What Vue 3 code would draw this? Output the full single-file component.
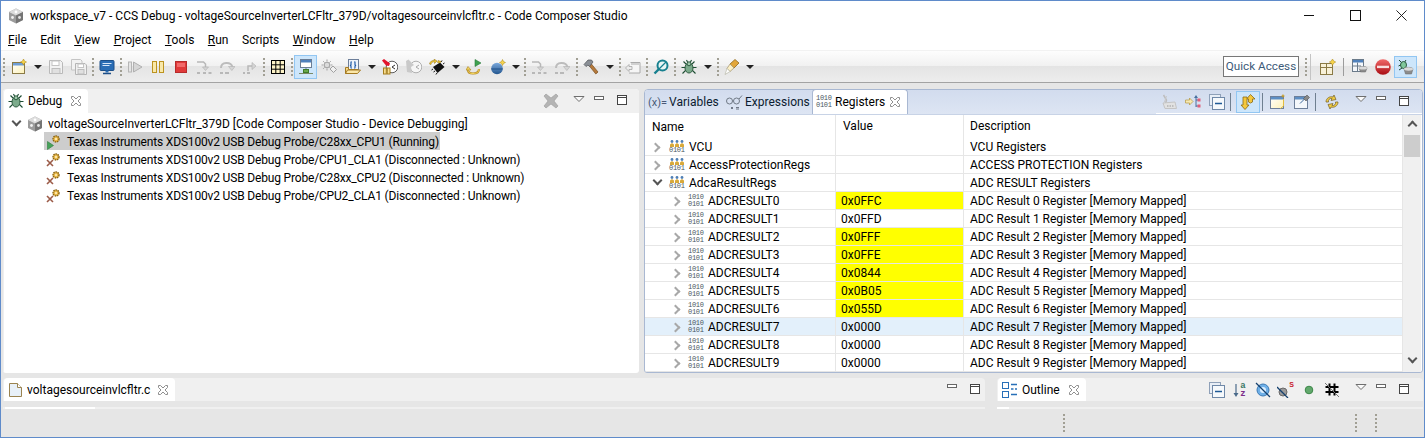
<script setup>
const menus = [
  { u: 'F', t: 'ile' },
  { u: '', t: 'Edit' },
  { u: 'V', t: 'iew' },
  { u: 'P', t: 'roject' },
  { u: 'T', t: 'ools' },
  { u: 'R', t: 'un' },
  { u: '', t: 'Scripts' },
  { u: 'W', t: 'indow' },
  { u: 'H', t: 'elp' }
]

// main toolbar, left to right: [kind or icon name, cell width]
const tools = [
  ['grip', 5], ['new', 25], ['drop', 13], ['save', 23], ['saveall', 23], ['grip', 5], ['monitor', 23], ['grip', 5],
  ['resume', 23], ['suspend', 23], ['terminate', 23], ['stepinto', 23], ['stepover', 23], ['stepret', 23], ['grip', 5],
  ['grid', 23], ['grip', 5], ['connect', 23, true], ['pingear', 24], ['folder', 24], ['drop', 13], ['clock', 24],
  ['clockoff', 23], ['chip', 24], ['drop', 13], ['runback', 24], ['ball', 23], ['drop', 13], ['grip', 5],
  ['stepinto', 23], ['stepover', 24], ['grip', 5], ['hammer', 23], ['drop', 15], ['grip', 5], ['winarrow', 22],
  ['grip', 5], ['search', 23], ['grip', 5], ['bug', 23], ['drop', 15], ['grip', 5], ['marker', 23], ['drop', 13]
]

const treeRows = [
  { icon: 'run', text: 'Texas Instruments XDS100v2 USB Debug Probe/C28xx_CPU1 (Running)', selected: true },
  { icon: 'off', text: 'Texas Instruments XDS100v2 USB Debug Probe/CPU1_CLA1 (Disconnected : Unknown)' },
  { icon: 'off', text: 'Texas Instruments XDS100v2 USB Debug Probe/C28xx_CPU2 (Disconnected : Unknown)' },
  { icon: 'off', text: 'Texas Instruments XDS100v2 USB Debug Probe/CPU2_CLA1 (Disconnected : Unknown)' }
]

const groups = [
  { name: 'VCU', desc: 'VCU Registers' },
  { name: 'AccessProtectionRegs', desc: 'ACCESS PROTECTION Registers' },
  { name: 'AdcaResultRegs', desc: 'ADC RESULT Registers', open: true }
]
const values = ['0x0FFC', '0x0FFD', '0x0FFF', '0x0FFE', '0x0844', '0x0B05', '0x055D', '0x0000', '0x0000', '0x0000']
const changed = [0, 2, 3, 4, 5, 6]
const registers = values.map((value, i) => ({
  name: 'ADCRESULT' + i,
  value,
  desc: `ADC Result ${i} Register [Memory Mapped]`,
  changed: changed.includes(i),
  hover: i === 7
}))
</script>

<template>
  <div class="window">
    <svg class="defs" width="0" height="0" aria-hidden="true">
      <defs>
        <linearGradient id="g-red" x1="0" y1="0" x2="0" y2="1"><stop offset="0" stop-color="#f26a6a" /><stop offset="1" stop-color="#a80c12" /></linearGradient>
        <linearGradient id="g-blue" x1="0" y1="0" x2="0" y2="1"><stop offset="0" stop-color="#7aa8dc" /><stop offset="1" stop-color="#23568f" /></linearGradient>
        <linearGradient id="g-win" x1="0" y1="0" x2="1" y2="1"><stop offset="0" stop-color="#ffffff" /><stop offset="1" stop-color="#fdf1b8" /></linearGradient>
      </defs>
      <symbol id="i-cube" viewBox="0 0 16 16">
        <path d="M8 .5l7 3.500v8l-7 3.500-7-3.500V4z" fill="#9c9c9c" />
        <path d="M8 .5l7 3.500-7 3.500L1 4z" fill="#dcdcdc" />
        <path d="M8 7.500v8l7-3.500V4z" fill="#757575" />
        <circle cx="8" cy="4" r="1.400" fill="#fff" /><circle cx="4.500" cy="9.500" r="1.400" fill="#f2f2f2" /><circle cx="11.500" cy="9.500" r="1.400" fill="#e6e6e6" />
      </symbol>
      <symbol id="i-new" viewBox="0 0 16 16">
        <rect x="1.500" y="3.500" width="12" height="11" fill="url(#g-win)" stroke="#8a7a45" />
        <rect x="2" y="4" width="11" height="2.500" fill="#6f9ed6" />
        <path d="M12.500 0l1 2 2 1-2 1-1 2-1-2-2-1 2-1z" fill="#f6d34a" stroke="#a88416" stroke-width=".5" />
      </symbol>
      <symbol id="i-save" viewBox="0 0 16 16">
        <path d="M1.500 1.500h11l2 2v11h-13z" fill="#f2f2f2" stroke="#b9b9b9" />
        <rect x="4" y="2" width="7" height="4.500" fill="#fff" stroke="#c4c4c4" />
        <rect x="4" y="9.500" width="8" height="5" fill="#e0e0e0" stroke="#bdbdbd" />
      </symbol>
      <symbol id="i-saveall" viewBox="0 0 16 16">
        <path d="M.5.500h9l1.500 1.500v9H.500z" fill="#f2f2f2" stroke="#c4c4c4" />
        <path d="M4.500 4.500h9.500l1.500 1.500v9.500h-11z" fill="#f0f0f0" stroke="#b4b4b4" />
        <rect x="7" y="5" width="5.500" height="3.500" fill="#fff" stroke="#c4c4c4" />
        <rect x="7" y="10.500" width="6" height="4.500" fill="#e0e0e0" stroke="#bdbdbd" />
      </symbol>
      <symbol id="i-monitor" viewBox="0 0 16 16">
        <rect x="1" y="1.500" width="14" height="10" rx="1" fill="#2a6db5" stroke="#1d4f88" />
        <path d="M3.500 4.500h9M3.500 6.500h7" stroke="#d6e6f7" />
        <path d="M6.500 11.500h3v2h-3z" fill="#2a6db5" /><path d="M4 14.500h8" stroke="#1d4f88" stroke-width="1.500" />
      </symbol>
      <symbol id="i-resume" viewBox="0 0 16 16">
        <rect x="1.500" y="3" width="3" height="10" fill="#e5e5e5" stroke="#b5b5b5" />
        <path d="M6.500 3l8.500 5-8.500 5z" fill="#d6d6d6" stroke="#b0b0b0" />
      </symbol>
      <symbol id="i-suspend" viewBox="0 0 16 16">
        <rect x="2.500" y="2.500" width="4" height="11" fill="#f9e8a9" stroke="#bc9320" />
        <rect x="9.500" y="2.500" width="4" height="11" fill="#f9e8a9" stroke="#bc9320" />
      </symbol>
      <symbol id="i-terminate" viewBox="0 0 16 16">
        <rect x="2.500" y="2.500" width="11" height="11" fill="#e03a3a" stroke="#b62b2b" />
        <rect x="4" y="4" width="8" height="4" fill="#f26a6a" />
      </symbol>
      <symbol id="i-stepinto" viewBox="0 0 16 16">
        <path d="M1 3h6.500l2 2v4" fill="none" stroke="#b8b8b8" stroke-width="1.500" />
        <path d="M6.500 8l3 3.500 3-3.500z" fill="#d5d5d5" stroke="#b0b0b0" stroke-width=".6" />
        <path d="M1 14h3M7 14h3M12.500 14h3" stroke="#a8a8a8" stroke-width="1.300" />
      </symbol>
      <symbol id="i-stepover" viewBox="0 0 16 16">
        <path d="M2 9C2 2.500 12 2.500 13.500 8" fill="none" stroke="#bcbcbc" stroke-width="2" />
        <path d="M9.500 7.500h6.500l-3.200 4z" fill="#d5d5d5" stroke="#b0b0b0" stroke-width=".6" />
        <path d="M1 14h3M6 14h4" stroke="#a8a8a8" stroke-width="1.300" />
      </symbol>
      <symbol id="i-stepret" viewBox="0 0 16 16">
        <path d="M6 12V7h5" fill="none" stroke="#b8b8b8" stroke-width="1.500" />
        <path d="M10 3.500L14 7l-4 3.500z" fill="#d5d5d5" stroke="#b0b0b0" stroke-width=".6" />
        <path d="M1 14h2M5 14h3" stroke="#a8a8a8" stroke-width="1.300" />
      </symbol>
      <symbol id="i-grid" viewBox="0 0 16 16">
        <rect x="1.500" y="1.500" width="13" height="13" fill="#fdf3c7" stroke="#000" />
        <path d="M5.800 1.500v13M10.200 1.500v13M1.500 5.800h13M1.500 10.200h13" stroke="#000" />
      </symbol>
      <symbol id="i-connect" viewBox="0 0 16 16">
        <rect x="2.500" y=".5" width="11" height="8" fill="#fff" stroke="#6b7d95" />
        <rect x="3" y="1" width="10" height="2.500" fill="#4f81bd" />
        <path d="M8 9v2" stroke="#6b7d95" />
        <rect x="5.500" y="10.500" width="5" height="3" fill="#67a94a" stroke="#3e7a2b" />
        <path d="M1 14.500h14" stroke="#7a8a6a" />
      </symbol>
      <symbol id="i-pingear" viewBox="0 0 16 16">
        <circle cx="6" cy="6" r="2.800" fill="#dcdcdc" stroke="#a2a2a2" />
        <path d="M6 .5v2M6 9.500v2M.5 6h2M9.500 6h2M2.200 2.200l1.400 1.400M8.400 8.400l1.400 1.400M2.200 9.800l1.400-1.400M8.400 3.600l1.400-1.400" stroke="#a2a2a2" />
        <path d="M9 10l3-3 3.500 3.500-3 3z" fill="#f0f0f0" stroke="#a0a0a0" />
      </symbol>
      <symbol id="i-folder" viewBox="0 0 16 16">
        <rect x="3.500" y=".5" width="10" height="10" fill="#eef3fa" stroke="#6d7f9a" />
        <path d="M6.500 2.500C5 4 7 5 5.500 6.500 7 8 5 8 6.500 9.500M9.500 2.500c1.500 1.500-.5 2.500 1 4-1.500 1.500.5 1.500-1 3" fill="none" stroke="#1f5aa6" stroke-width="1.200" />
        <path d="M.5 14.500V8.500h3v2h9l-2 4z" fill="#f7d98a" stroke="#a57a22" />
        <path d="M.5 14.500l2-3.500h13l-3 3.500z" fill="#fbe7a8" stroke="#a57a22" />
      </symbol>
      <symbol id="i-clock" viewBox="0 0 16 16">
        <circle cx="10" cy="8" r="5.800" fill="#fff" stroke="#5d5d5d" />
        <path d="M13 6l-3 2 3 2" fill="none" stroke="#333" />
        <rect x="1.500" y="9" width="2.800" height="6" fill="#f7dc8e" stroke="#a47d1c" />
        <rect x="5.200" y="9" width="2.800" height="6" fill="#f7dc8e" stroke="#a47d1c" />
        <path d="M0 1.500L2 0l6 4.500-1 2.500-3-.5z" fill="#e3142b" />
      </symbol>
      <symbol id="i-clockoff" viewBox="0 0 16 16">
        <circle cx="10" cy="8" r="5.800" fill="#f6f6f6" stroke="#b0b0b0" />
        <path d="M13 6l-3 2 3 2" fill="none" stroke="#a8a8a8" />
        <path d="M0 2l2.500-1.500L8 6 5 8l1 6-5-1z" fill="#c9c9c9" />
      </symbol>
      <symbol id="i-chip" viewBox="0 0 16 16">
        <path d="M4 8l7-4.500 4.500 4.500-7 6z" fill="#111" />
        <path d="M4 10l-1.500 1M6 12l-1.500 1M8 14l-1 1.500M12 3l1-1.500M14 5l1.500-1" stroke="#111" />
        <path d="M.5 5C1 2.500 3 1 5.500 1.500L5 0l3 2-2.500 2.500V3C3.500 2.500 2.500 3.500 2 5.500z" fill="#eec62f" stroke="#947217" stroke-width=".5" />
        <path d="M9 1.500l3 1-1 1.500-2.500-.5z" fill="#eec62f" stroke="#947217" stroke-width=".5" />
      </symbol>
      <symbol id="i-runback" viewBox="0 0 16 16">
        <path d="M9 .5l6 3.500-6 3.500z" fill="#3ea150" stroke="#2a7a3a" stroke-width=".6" />
        <path d="M13 10c0 3-2 4.500-6 4.500-3 0-5-1-5-3.500" fill="none" stroke="#b78a22" stroke-width="2.200" />
        <path d="M13 10c0 3-2 4.500-6 4.500-3 0-5-1-5-3.500" fill="none" stroke="#f4d65e" stroke-width="1" />
        <path d="M0 11l2-3.500 3 3.500z" fill="#f4d65e" stroke="#a67e1c" stroke-width=".6" />
      </symbol>
      <symbol id="i-ball" viewBox="0 0 16 16">
        <circle cx="7" cy="9.500" r="5.800" fill="url(#g-blue)" />
        <path d="M1.300 10h11.400" stroke="#1f4f86" />
        <path d="M12.500 .5l1 2 2 1-2 1-1 2-1-2-2-1 2-1z" fill="#f6d34a" stroke="#a88416" stroke-width=".5" />
      </symbol>
      <symbol id="i-hammer" viewBox="0 0 16 16">
        <path d="M6 6.500l2-2 7 8.500-2.200 2z" fill="#b57a3c" stroke="#7a4d1e" stroke-width=".7" />
        <path d="M1 5.500L5 1h3.500l1.500 2-3.500 4.500L5 6 3 7.500z" fill="#8a8f96" stroke="#4e5257" stroke-width=".7" />
      </symbol>
      <symbol id="i-winarrow" viewBox="0 0 16 16">
        <path d="M5.500 3.500h9.500v10.500H4" fill="#f5f5f5" stroke="#aaa" />
        <path d="M6 4h9v2H6z" fill="#d0d0d0" />
        <path d="M.5 9l3.500-3.500v2h3v3h-3v2z" fill="#ececec" stroke="#a6a6a6" stroke-width=".8" />
      </symbol>
      <symbol id="i-search" viewBox="0 0 16 16">
        <circle cx="9.500" cy="6.500" r="5" fill="#e8f5f5" stroke="#17808f" stroke-width="2" />
        <path d="M6 10l-4.500 4.500" stroke="#17808f" stroke-width="2.400" />
        <path d="M13 3l-7 7" stroke="#17808f" stroke-width="1.300" />
      </symbol>
      <symbol id="i-bug" viewBox="0 0 16 16">
        <path d="M2.500 2.500l3 3M13.500 2.500l-3 3M.5 8.500h15M1.500 14.500l3-3M14.500 14.500l-3-3M5.500 1l1.500 3M10.500 1L9 4" stroke="#1d4d33" stroke-width="1.100" />
        <ellipse cx="8" cy="9" rx="4" ry="5" fill="#7cab8c" stroke="#2d5a3f" />
        <circle cx="8" cy="4.800" r="2" fill="#9ec7aa" stroke="#2d5a3f" />
      </symbol>
      <symbol id="i-marker" viewBox="0 0 16 16">
        <path d="M6 5l5-4.500 4 3.500-5 5z" fill="#e2a63a" stroke="#8f6a1d" stroke-width=".8" />
        <path d="M6 5l4 4-4 3.500-3-3z" fill="#fcf0c6" stroke="#a99c77" stroke-width=".8" />
        <path d="M3 9.500l3 3-5 3z" fill="#fff" stroke="#b8b8a8" stroke-width=".7" />
      </symbol>
      <symbol id="i-persp" viewBox="0 0 16 16">
        <rect x=".5" y="4.500" width="12" height="11" fill="#f8f1d8" stroke="#8a7a45" />
        <path d="M.5 8.500h12M6.500 4.500v11" stroke="#8a7a45" />
        <path d="M12.500 0l1.200 2 2 1-2 1.200-1.200 2-1.200-2-2-1.200 2-1z" fill="#f6d34a" stroke="#a88416" stroke-width=".5" />
      </symbol>
      <symbol id="i-perspgray" viewBox="0 0 16 16">
        <rect x=".5" y=".5" width="11" height="12" fill="#f4f7fb" stroke="#6a7a8a" />
        <rect x="1" y="1" width="10" height="2.500" fill="#4f81bd" />
        <path d="M1 7h8M5.500 3.500v9" stroke="#6a7a8a" />
        <path d="M7 9c0-2 8-2 8 0l-1.500 4h-5z" fill="#8c8c8c" stroke="#666" stroke-width=".5" />
        <ellipse cx="11" cy="9" rx="4" ry="1.500" fill="#dadada" />
      </symbol>
      <symbol id="i-stop" viewBox="0 0 16 16">
        <circle cx="8" cy="8" r="7.800" fill="url(#g-red)" />
        <rect x="2" y="6.700" width="12" height="2.400" fill="#f9dede" />
      </symbol>
      <symbol id="i-bugpersp" viewBox="0 0 16 16">
        <path d="M1 1l3 3M8 1L6 4M.5 7l3-1.500M1 11l3-2" stroke="#1d4d33" />
        <ellipse cx="5.500" cy="6" rx="3" ry="3.500" fill="#7fc79a" stroke="#2d5a3f" />
        <path d="M6 10c0-2.200 9-2.200 9 0l-1.500 5h-6z" fill="#8c8c8c" stroke="#666" stroke-width=".5" />
        <ellipse cx="10.500" cy="10" rx="4.500" ry="1.700" fill="#dadada" />
      </symbol>
      <symbol id="i-remove" viewBox="0 0 16 16">
        <path d="M3 1l5 4 5-4 2 2-4 5 4 5-2 2-5-4-5 4-2-2 4-5-4-5z" fill="#b4b4b4" stroke="#9a9a9a" stroke-width=".6" />
      </symbol>
      <symbol id="i-close" viewBox="0 0 12 12">
        <path d="M1.500 1.500h2L6 4l2.500-2.500h2v2L8 6l2.500 2.500v2h-2L6 8l-2.500 2.500h-2v-2L4 6 1.500 3.500z" fill="#fff" stroke="#8f8f8f" />
      </symbol>
      <symbol id="i-menu" viewBox="0 0 12 8"><path d="M1 1.500h10L6 6.500z" fill="#fafafa" stroke="#6f6f6f" /></symbol>
      <symbol id="i-min" viewBox="0 0 16 8"><rect x="1.500" y="1.500" width="9" height="3" fill="#fff" stroke="#666" /></symbol>
      <symbol id="i-max" viewBox="0 0 12 12"><rect x=".5" y=".5" width="9" height="9" fill="#fff" stroke="#444" /><path d="M.5 2.500h9" stroke="#444" /></symbol>
      <symbol id="i-run" viewBox="0 0 18 16">
        <circle cx="12" cy="5" r="3" fill="#e9b949" stroke="#8a6414" stroke-width="1.400" stroke-dasharray="1.500 .7" />
        <circle cx="12" cy="5" r="1" fill="#fff4c8" />
        <path d="M3.500 7.500l6 4-6 4z" fill="#46a35a" stroke="#2d7a3d" stroke-width=".6" />
      </symbol>
      <symbol id="i-off" viewBox="0 0 18 16">
        <circle cx="12" cy="5" r="3" fill="#e9b949" stroke="#8a6414" stroke-width="1.400" stroke-dasharray="1.500 .7" />
        <circle cx="12" cy="5" r="1" fill="#fff4c8" />
        <path d="M3 8l6 6M9 8l-6 6" stroke="#9b5b48" stroke-width="1.600" />
      </symbol>
      <symbol id="i-people" viewBox="0 0 16 7">
        <g fill="#4f7fb5"><circle cx="3" cy="1.500" r="1.400" /><circle cx="8" cy="1.500" r="1.400" /><circle cx="13" cy="1.500" r="1.400" /></g>
        <path d="M1 7V4.500l2-1.500 2 1.500V7zM6 7V4.500l2-1.500 2 1.500V7zM11 7V4.500l2-1.500 2 1.500V7z" fill="#d8a93a" />
      </symbol>
      <symbol id="i-glasses" viewBox="0 0 18 16">
        <circle cx="4.500" cy="7" r="3" fill="none" stroke="#707a86" />
        <circle cx="11.500" cy="7" r="3" fill="none" stroke="#707a86" />
        <path d="M7.500 7h1M14 5l3-3.500" stroke="#707a86" />
        <path d="M6 13l2 2M8 13l-2 2M11 13.500h3M11 15h3" stroke="#55606c" stroke-width=".8" />
      </symbol>
      <symbol id="i-file" viewBox="0 0 16 16">
        <path d="M1.500 1.500h8l4 4v9h-12z" fill="#e8f0f8" stroke="#9a8350" />
        <path d="M9.500 1.500v4h4" fill="#fff" stroke="#9a8350" />
      </symbol>
      <symbol id="i-outline" viewBox="0 0 16 16">
        <g fill="#fff" stroke="#2870b8"><rect x=".5" y=".5" width="6" height="6" /><rect x=".5" y="9.500" width="6" height="6" /></g>
        <path d="M9 2.500h6M9 7h2.500M13 7h2M9 12.500h6" stroke="#2870b8" stroke-width="1.300" />
      </symbol>
      <symbol id="i-collapse" viewBox="0 0 16 16">
        <rect x=".5" y=".5" width="11" height="11" fill="#e8eef6" stroke="#8ea0b8" />
        <rect x="3.500" y="3.500" width="12" height="12" fill="#f6f9fc" stroke="#6f88a8" />
        <path d="M6 9.500h7" stroke="#1f5a96" stroke-width="1.500" />
      </symbol>
      <symbol id="i-collapsegray" viewBox="0 0 16 16">
        <path d="M2.500 1l3 5-2 7" fill="none" stroke="#bdbdbd" stroke-width="1.500" />
        <path d="M5.500 2l-2 6" stroke="#c8c8c8" />
        <path d="M2 9l12-1 1.500 6.500H4z" fill="#e2e2e2" stroke="#c4c4c4" />
        <path d="M6 12h1.500M8.500 12H10M11 12h1.500" stroke="#9a9a9a" />
      </symbol>
      <symbol id="i-arrowtree" viewBox="0 0 16 16">
        <path d="M.5 6h4V4l3.500 3.500L4.500 11V9h-4z" fill="#f7e9b0" stroke="#b59840" stroke-width=".7" />
        <path d="M11 3v10M11 6h2M11 12h2" stroke="#4870a0" />
        <path d="M9 4l2-3 2 3z" fill="#4870a0" />
        <rect x="12.500" y="4.500" width="3" height="3" fill="#e0607a" /><rect x="12.500" y="10.500" width="3" height="3" fill="#e0607a" />
      </symbol>
      <symbol id="i-swap" viewBox="0 0 16 16">
        <path d="M8.500 8V5H6.500l4-4.500 4.500 4.500h-2.500v3l-2 1z" fill="#f5c83c" stroke="#8a6a14" stroke-width=".8" />
        <path d="M3 3h4v8h2l-4 4.500L1 11h2z" fill="#f5c83c" stroke="#8a6a14" stroke-width=".8" />
      </symbol>
      <symbol id="i-winnew" viewBox="0 0 16 16">
        <rect x=".5" y="2.500" width="13" height="12" fill="url(#g-win)" stroke="#6d7f9a" />
        <rect x="1" y="3" width="12" height="2.500" fill="#5d8ec4" />
        <path d="M13 .5v3M11.500 2h3" stroke="#c79a1e" stroke-width="1.200" />
        <path d="M13.500 5v7l-3 2.500" fill="none" stroke="#e5bd3d" />
      </symbol>
      <symbol id="i-winpin" viewBox="0 0 16 16">
        <rect x=".5" y="2.500" width="13" height="12" fill="#f4f7fb" stroke="#6d7f9a" />
        <rect x="1" y="3" width="12" height="2.500" fill="#5d8ec4" />
        <path d="M6 9.500l5-5" stroke="#3f6a9c" />
        <path d="M9.500 4.500L13 1l2.500 2.500L12 7z" fill="#888" stroke="#555" stroke-width=".6" />
      </symbol>
      <symbol id="i-sync" viewBox="0 0 16 16">
        <path d="M2 8c0-4 4-6 7-5l1-2 2 4.500-5 1 1-2C5.500 4 4 6 4.500 8zM14 8c0 4-4 6-7 5l-1 2-2-4.500 5-1-1 2c2.500.500 4-1.500 3.500-3.500z" fill="#f2cd41" stroke="#7d6b35" stroke-width=".8" />
      </symbol>
      <symbol id="i-sortarrow" viewBox="0 0 6 16">
        <path d="M3 2v11" stroke="#4a6a8a" stroke-width="1.200" /><path d="M.5 11L3 15l2.500-4z" fill="#4a6a8a" />
      </symbol>
      <symbol id="i-hideb" viewBox="0 0 16 16">
        <circle cx="8" cy="8" r="6" fill="#6fb0e8" stroke="#3c7ab5" />
        <circle cx="8" cy="8" r="3" fill="#dcefff" />
        <path d="M1 1l14 14" stroke="#15406e" stroke-width="1.300" />
      </symbol>
      <symbol id="i-hides" viewBox="0 0 12 12">
        <circle cx="6" cy="6" r="4" fill="#9a9a9a" stroke="#6a6a6a" />
        <path d="M0 1l11 11" stroke="#15406e" stroke-width="1.300" />
      </symbol>
      <symbol id="i-dot" viewBox="0 0 16 16"><circle cx="8" cy="8" r="3.800" fill="#62a86c" stroke="#3b8748" /></symbol>
      <symbol id="i-hash" viewBox="0 0 16 16">
        <path d="M5.500 1.500v12M10.500 1.500v12M1.500 5h13M1.500 10h13" stroke="#000" stroke-width="2" />
        <path d="M1 1l14 14" stroke="#777" />
      </symbol>
    </svg>

    <header class="titlebar">
      <svg class="ic title-ic"><use href="#i-cube" /></svg>
      <span class="title-text">workspace_v7 - CCS Debug - voltageSourceInverterLCFltr_379D/voltagesourceinvlcfltr.c - Code Composer Studio</span>
      <span class="grow"></span>
      <div class="winbtn"><span class="w-min"></span></div>
      <div class="winbtn"><span class="w-max"></span></div>
      <div class="winbtn">
        <svg class="w-close" viewBox="0 0 12 12"><path d="M.5.500l11 11M11.500.500l-11 11" stroke="#111" /></svg>
      </div>
    </header>

    <nav class="menubar">
      <span v-for="m in menus" :key="m.t"><u v-if="m.u">{{ m.u }}</u>{{ m.t }}</span>
    </nav>

    <div class="toolbar">
      <template v-for="(t, i) in tools" :key="i">
        <span v-if="t[0] === 'grip'" class="grip" :style="{ width: t[1] + 'px' }"></span>
        <span v-else-if="t[0] === 'drop'" class="cell" :style="{ width: t[1] + 'px' }"><span class="caret"></span></span>
        <span v-else class="cell" :class="{ active: t[2] }" :style="{ width: t[1] + 'px' }">
          <svg class="ic"><use :href="'#i-' + t[0]" /></svg>
        </span>
      </template>
      <span class="grow"></span>
      <div class="quick">Quick Access</div>
      <span class="grip quick-grip"></span>
      <span class="divider"></span>
      <span class="rcell"><svg class="ic"><use href="#i-persp" /></svg></span>
      <span class="vsep"></span>
      <span class="rcell"><svg class="ic"><use href="#i-perspgray" /></svg></span>
      <span class="rcell"><svg class="ic"><use href="#i-stop" /></svg></span>
      <span class="rcell on"><svg class="ic"><use href="#i-bugpersp" /></svg></span>
    </div>

    <main class="workbench">
      <div class="top-row">
        <section class="panel debug">
          <div class="tabbar">
            <div class="tab debug-tab">
              <svg class="ic"><use href="#i-bug" /></svg>
              <span>Debug</span>
              <svg class="x"><use href="#i-close" /></svg>
            </div>
            <span class="grow"></span>
            <svg class="ic ctl-remove"><use href="#i-remove" /></svg>
            <svg class="m-menu"><use href="#i-menu" /></svg>
            <svg class="m-min"><use href="#i-min" /></svg>
            <svg class="m-max"><use href="#i-max" /></svg>
          </div>
          <div class="tree">
            <div class="tree-root">
              <span class="chev open"></span>
              <svg class="ic"><use href="#i-cube" /></svg>
              <span>voltageSourceInverterLCFltr_379D [Code Composer Studio - Device Debugging]</span>
            </div>
            <div v-for="r in treeRows" :key="r.text" class="tree-row" :class="{ selected: r.selected }">
              <svg class="tree-ic"><use :href="'#i-' + r.icon" /></svg>
              <span>{{ r.text }}</span>
            </div>
          </div>
        </section>

        <section class="panel regs">
          <div class="tabbar blue">
            <div class="vtab"><span class="xeq">(x)=</span> Variables</div>
            <div class="vtab"><svg class="glasses"><use href="#i-glasses" /></svg> Expressions</div>
            <div class="tab reg-tab">
              <span class="bits"><span>1010</span><span>0101</span></span>
              <span>Registers</span>
              <svg class="x"><use href="#i-close" /></svg>
            </div>
            <span class="grow"></span>
            <div class="view-tools">
              <span class="vcell"><svg class="ic"><use href="#i-collapsegray" /></svg></span>
              <span class="vcell"><svg class="ic"><use href="#i-arrowtree" /></svg></span>
              <span class="vcell"><svg class="ic"><use href="#i-collapse" /></svg></span>
              <span class="vline vl-a"></span>
              <span class="vcell on"><svg class="ic"><use href="#i-swap" /></svg></span>
              <span class="vline vl-b"></span>
              <span class="vcell"><svg class="ic"><use href="#i-winnew" /></svg></span>
              <span class="vcell"><svg class="ic"><use href="#i-winpin" /></svg></span>
              <span class="vline vl-c"></span>
              <span class="vcell"><svg class="ic"><use href="#i-sync" /></svg></span>
              <svg class="m-menu view-menu"><use href="#i-menu" /></svg>
              <svg class="m-min"><use href="#i-min" /></svg>
              <svg class="m-max"><use href="#i-max" /></svg>
            </div>
          </div>
          <div class="table-wrap">
            <div class="table">
              <div class="row head">
                <div class="c-name">Name</div>
                <div class="c-val">Value</div>
                <div class="c-desc">Description</div>
              </div>
              <div v-for="g in groups" :key="g.name" class="row">
                <div class="c-name lvl0">
                  <span class="chev" :class="{ open: g.open }"></span>
                  <span class="bits">
                    <svg class="people"><use href="#i-people" /></svg>
                    <span>0101</span>
                  </span>
                  <span>{{ g.name }}</span>
                </div>
                <div class="c-val"></div>
                <div class="c-desc">{{ g.desc }}</div>
              </div>
              <div v-for="r in registers" :key="r.name" class="row" :class="{ hover: r.hover }">
                <div class="c-name lvl1">
                  <span class="chev"></span>
                  <span class="bits"><span>1010</span><span>0101</span></span>
                  <span>{{ r.name }}</span>
                </div>
                <div class="c-val" :class="{ changed: r.changed }">{{ r.value }}</div>
                <div class="c-desc">{{ r.desc }}</div>
              </div>
            </div>
            <div class="scrollbar">
              <span class="sb-up"></span>
              <span class="sb-thumb"></span>
              <span class="grow"></span>
              <span class="sb-down"></span>
            </div>
          </div>
        </section>
      </div>

      <div class="low-row">
        <section class="low editor">
          <div class="tab low-tab">
            <svg class="ic"><use href="#i-file" /></svg>
            <span>voltagesourceinvlcfltr.c</span>
            <svg class="x"><use href="#i-close" /></svg>
          </div>
          <span class="grow"></span>
          <svg class="m-min"><use href="#i-min" /></svg>
          <svg class="m-max"><use href="#i-max" /></svg>
        </section>
        <section class="low outline">
          <div class="tab low-tab out-tab">
            <svg class="ic"><use href="#i-outline" /></svg>
            <span>Outline</span>
            <svg class="x"><use href="#i-close" /></svg>
          </div>
          <span class="grow"></span>
          <span class="vcell"><svg class="ic"><use href="#i-collapse" /></svg></span>
          <span class="vcell sort">
            <svg class="sort-arrow"><use href="#i-sortarrow" /></svg>
            <span class="sort-letters"><span class="sort-a">a</span><span class="sort-z">z</span></span>
          </span>
          <span class="vcell"><svg class="ic"><use href="#i-hideb" /></svg></span>
          <span class="vcell static">
            <svg class="hide-s"><use href="#i-hides" /></svg>
            <span class="sort-s">S</span>
          </span>
          <span class="vcell"><svg class="ic"><use href="#i-dot" /></svg></span>
          <span class="vcell"><svg class="ic"><use href="#i-hash" /></svg></span>
          <svg class="m-menu view-menu"><use href="#i-menu" /></svg>
          <svg class="m-min"><use href="#i-min" /></svg>
          <svg class="m-max"><use href="#i-max" /></svg>
        </section>
      </div>

      <div class="strips">
        <span class="strip-left"><span class="strip-white"></span></span>
        <span class="strip-right"><span class="strip-white small"></span></span>
      </div>

      <footer class="status">
        <span class="grow"></span>
        <span class="grip s1"></span>
        <span class="grip s2"></span>
        <span class="grip s3"></span>
      </footer>
    </main>
  </div>
</template>

<style>
html,
body {
  margin: 0;
  background: #fff;
}
</style>

<style scoped>
.window {
  position: relative;
  width: 1425px;
  height: 438px;
  box-sizing: border-box;
  border: 1px solid #5f8bca;
  display: flex;
  flex-direction: column;
  overflow: hidden;
  background: #fff;
  color: #000;
  font: 12px Roboto, sans-serif;
}
.defs {
  position: absolute;
}
.grow {
  flex: 1;
}
.ic {
  width: 16px;
  height: 16px;
  flex: none;
}
.titlebar {
  height: 29px;
  display: flex;
  align-items: center;
  flex: none;
}
.title-ic {
  margin-left: 7px;
  margin-right: 6px;
}
.winbtn {
  width: 46px;
  height: 29px;
  display: flex;
  align-items: center;
  justify-content: center;
}
.w-min {
  width: 10px;
  height: 1px;
  background: #111;
}
.w-max {
  width: 9px;
  height: 9px;
  border: 1px solid #111;
}
.w-close {
  width: 11px;
  height: 11px;
}
.menubar {
  height: 20px;
  flex: none;
  display: flex;
  align-items: center;
  gap: 13.500px;
  padding-left: 7px;
}
.toolbar {
  height: 33px;
  flex: none;
  box-sizing: border-box;
  border-top: 1px solid #f2f2f2;
  border-bottom: 1px solid #a3a3a3;
  background: linear-gradient(#fdfdfd, #f1f1f1 48%, #e4e4e4 50%, #ededed);
  display: flex;
  align-items: center;
}
.cell {
  height: 24px;
  display: flex;
  align-items: center;
  justify-content: center;
  flex: none;
  box-sizing: border-box;
}
.cell.active,
.rcell.on,
.vcell.on {
  background: #cde6fb;
  border: 1px solid #92c6f2;
}
.caret {
  width: 0;
  height: 0;
  border: 4px solid transparent;
  border-top: 4px solid #222;
  border-bottom: 0;
}
.grip {
  height: 18px;
  flex: none;
  background: repeating-linear-gradient(#a19f94 0 2px, transparent 2px 4px) center / 2px 100% no-repeat;
}
.quick {
  width: 76px;
  height: 21px;
  box-sizing: border-box;
  border: 1px solid #777;
  background: #fff;
  color: #3c5a78;
  font-size: 11.700px;
  line-height: 19px;
  text-align: center;
  white-space: nowrap;
}
.quick-grip {
  width: 5px;
  margin-left: 4px;
}
.divider {
  width: 1px;
  height: 26px;
  background: #c4c4c4;
  margin: 0 5px 0 2px;
}
.rcell {
  width: 23px;
  height: 22px;
  display: flex;
  align-items: center;
  justify-content: center;
  box-sizing: border-box;
}
.vsep {
  width: 1px;
  height: 18px;
  background: #9c9c9c;
  margin: 0 4px;
}
.toolbar > .rcell:last-child {
  margin-right: 7px;
}
.workbench {
  flex: 1;
  min-height: 0;
  background: #e6e6e6;
  display: flex;
  flex-direction: column;
  padding-top: 6px;
}
.top-row {
  height: 284px;
  flex: none;
  display: flex;
  gap: 5px;
  padding: 0 1px 0 2px;
}
.panel {
  display: flex;
  flex-direction: column;
  min-width: 0;
  box-sizing: border-box;
  border-radius: 4px 4px 3px 3px;
  overflow: hidden;
}
.debug {
  width: 636px;
  background: #fff;
}
.regs {
  flex: 1;
  border: 1px solid #a9b8d2;
  background: #fff;
}
.tabbar {
  height: 24px;
  flex: none;
  display: flex;
  align-items: center;
  background: #f0f0f0;
}
.tabbar.blue {
  height: 25px;
  background: linear-gradient(#d2dcee, #dde5f3);
  border-bottom: 1px solid #c8d3e6;
  box-sizing: border-box;
}
.tab {
  height: 100%;
  background: #fff;
  display: flex;
  align-items: center;
  box-sizing: border-box;
  border-radius: 4px 4px 0 0;
}
.debug-tab {
  margin-left: 1px;
  width: 84px;
  padding: 0 6px 0 4px;
  gap: 4px;
}
.x {
  width: 12px;
  height: 12px;
  flex: none;
  margin-left: auto;
}
.ctl-remove {
  margin-right: 14px;
}
.m-menu {
  width: 12px;
  height: 8px;
  margin-right: 8px;
  margin-top: -5px;
  flex: none;
}
.m-min {
  width: 16px;
  height: 8px;
  margin-right: 2px;
  margin-top: -5px;
  flex: none;
}
.m-max {
  width: 12px;
  height: 12px;
  margin-left: 6px;
  margin-right: 10px;
  flex: none;
}
.tree {
  flex: 1;
  padding-top: 1px;
  border-left: 1px solid #efefef;
}
.tree-root {
  height: 18px;
  box-sizing: border-box;
  padding-top: 1px;
  display: flex;
  align-items: center;
  white-space: nowrap;
}
.tree-root .chev {
  margin-left: 7px;
  margin-right: 6px;
}
.tree-root .ic {
  margin-right: 5px;
}
.tree-row {
  height: 18px;
  box-sizing: border-box;
  padding-top: 1px;
  width: 396px;
  margin-left: 40px;
  display: flex;
  align-items: center;
  white-space: nowrap;
  letter-spacing: -0.170px;
}
.tree-row.selected {
  background: #cdcdcd;
}
.tree-ic {
  width: 18px;
  height: 16px;
  margin-right: 5px;
  flex: none;
}
.chev {
  display: inline-block;
  width: 10px;
  height: 10px;
  flex: none;
  position: relative;
}
.chev::before {
  content: '';
  position: absolute;
  left: 0;
  top: 2px;
  width: 5px;
  height: 5px;
  border-top: 2px solid #a8a8a8;
  border-right: 2px solid #a8a8a8;
  transform: rotate(45deg);
}
.chev.open::before {
  left: 2px;
  top: -1px;
  border-color: #555;
  transform: rotate(135deg);
}
.vtab {
  display: flex;
  align-items: center;
  height: 100%;
  color: #0c1c30;
  white-space: nowrap;
  box-sizing: border-box;
  flex: none;
}
.vtab:nth-child(1) {
  padding-left: 3px;
  width: 80px;
}
.vtab:nth-child(2) {
  width: 87px;
}
.xeq {
  color: #4a5a78;
  font-size: 11px;
  margin-right: 2px;
}
.glasses {
  width: 18px;
  height: 16px;
  margin-right: 2px;
  flex: none;
}
.reg-tab {
  width: 96px;
  padding: 0 6px 0 3px;
  gap: 3px;
  border: 1px solid #a9b8d2;
  border-bottom: 0;
  margin-top: -1px;
  height: 25px;
}
.bits {
  width: 16px;
  flex: none;
  display: flex;
  flex-direction: column;
  font: 7px/7px 'Liberation Mono', monospace;
  letter-spacing: -0.300px;
  color: #4a5560;
}
.people {
  width: 16px;
  height: 7px;
  display: block;
}
.view-tools {
  display: flex;
  align-items: center;
  height: 100%;
  border-bottom: 1px solid #fff;
  box-sizing: border-box;
  padding-left: 1px;
}
.view-tools .m-max {
  margin-right: 11px;
}
.vcell {
  width: 24px;
  height: 22px;
  display: flex;
  align-items: center;
  justify-content: center;
  flex: none;
  box-sizing: border-box;
}
.vline {
  width: 1px;
  height: 18px;
  background: #6f7f90;
  flex: none;
}
.vl-a {
  margin: 0 5px 0 1px;
}
.vl-b {
  margin: 0 3px 0 2px;
}
.vl-c {
  margin: 0 4px 0 1px;
}
.view-menu {
  margin-left: 11px;
}
.table-wrap {
  flex: 1;
  min-height: 0;
  display: flex;
}
.table {
  flex: 1;
  min-width: 0;
}
.row {
  height: 18px;
  display: flex;
  box-sizing: border-box;
  border-bottom: 1px solid #e6e6e6;
  white-space: nowrap;
  line-height: 19px;
}
.row.head {
  height: 23px;
  line-height: 22px;
  border-bottom: 0;
}
.row.head .c-name {
  padding-left: 7px;
  padding-top: 0;
}
.row.head .c-val {
  padding-left: 7px;
}
.row.hover {
  background: #e3f0fb;
}
.c-name {
  width: 191px;
  box-sizing: border-box;
  border-right: 1px solid #e6e6e6;
  padding-top: 1px;
  display: flex;
  align-items: center;
  flex: none;
}
.c-val {
  width: 128px;
  box-sizing: border-box;
  border-right: 1px solid #e6e6e6;
  padding-left: 5px;
  flex: none;
}
.c-val.changed {
  background: #ffff00;
}
.c-desc {
  flex: 1;
  padding-left: 6px;
}
.lvl0 {
  padding-left: 7px;
}
.lvl0 .chev {
  margin-right: 7px;
}
.lvl0 .bits,
.lvl1 .bits {
  margin-right: 4px;
}
.lvl1 {
  padding-left: 27px;
}
.lvl1 .chev {
  margin-right: 6px;
}
.scrollbar {
  width: 18px;
  flex: none;
  background: #f0f0f0;
  display: flex;
  flex-direction: column;
  align-items: center;
  margin-right: 1px;
  border-left: 1px solid #e6e6e6;
}
.sb-thumb {
  width: 16px;
  height: 22px;
  background: #cdcdcd;
  flex: none;
}
.sb-up,
.sb-down {
  height: 20px;
  flex: none;
  position: relative;
  width: 16px;
}
.sb-up::before,
.sb-down::before {
  content: '';
  position: absolute;
  left: 5px;
  top: 7px;
  width: 5px;
  height: 5px;
  border-top: 2px solid #555;
  border-left: 2px solid #555;
  transform: rotate(45deg);
}
.sb-down::before {
  top: 3px;
  transform: rotate(225deg);
}
.low-row {
  height: 23px;
  margin-top: 5px;
  flex: none;
  display: flex;
  gap: 12px;
  padding: 0 1px 0 2px;
}
.low {
  background: #f0f0f0;
  border-radius: 4px 4px 0 0;
  display: flex;
  align-items: center;
  height: 100%;
}
.editor {
  width: 982px;
}
.editor .m-max {
  margin-right: 3px;
}
.outline {
  flex: 1;
}
.outline .m-max {
  margin-right: 12px;
}
.low-tab {
  height: 23px;
  margin-left: 1px;
  gap: 3px;
  padding: 0 6px 0 4px;
}
.editor .low-tab {
  width: 171px;
}
.out-tab {
  width: 88px;
  gap: 4px;
}
.low .vcell {
  width: 23px;
}
.low .view-menu {
  margin-left: 12px;
}
.strips {
  display: flex;
  height: 2px;
  margin-top: 6px;
  gap: 12px;
  padding: 0 1px 0 2px;
  flex: none;
}
.strip-left {
  width: 982px;
  background: #f0f0f0;
}
.strip-right {
  flex: 1;
  background: #f0f0f0;
}
.strip-white {
  display: block;
  width: 90px;
  height: 2px;
  margin-left: 2px;
  background: #fff;
}
.strip-white.small {
  width: 12px;
  margin-left: 0;
}
.status {
  flex: 1;
  display: flex;
  align-items: center;
}
.s1 {
  width: 5px;
  margin-right: 287px;
}
.s2 {
  width: 5px;
  margin-right: 15px;
}
.s3 {
  width: 5px;
  margin-right: 46px;
}
.sort {
  gap: 1px;
}
.sort-arrow {
  width: 6px;
  height: 16px;
  flex: none;
}
.sort-letters {
  display: flex;
  flex-direction: column;
  font: bold 9px/8px 'Liberation Mono', monospace;
}
.sort-a {
  color: #3c7a66;
}
.sort-z {
  color: #7d2e8a;
}
.static {
  align-items: flex-end;
  padding-bottom: 3px;
}
.hide-s {
  width: 12px;
  height: 12px;
  flex: none;
}
.sort-s {
  font: bold 7px/8px 'Liberation Sans', sans-serif;
  color: #c8202c;
  align-self: flex-start;
  margin-top: 2px;
}
</style>
